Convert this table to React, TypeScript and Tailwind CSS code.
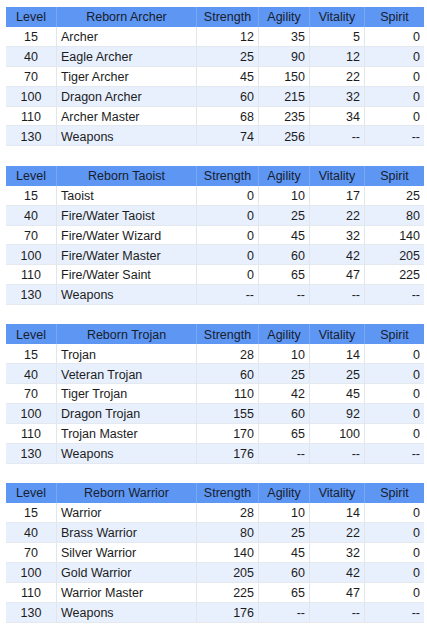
import React from "react";

type Row = [string, string, string, string, string, string];

const tables: { title: string; rows: Row[] }[] = [
  {
    title: "Reborn Archer",
    rows: [
      ["15", "Archer", "12", "35", "5", "0"],
      ["40", "Eagle Archer", "25", "90", "12", "0"],
      ["70", "Tiger Archer", "45", "150", "22", "0"],
      ["100", "Dragon Archer", "60", "215", "32", "0"],
      ["110", "Archer Master", "68", "235", "34", "0"],
      ["130", "Weapons", "74", "256", "--", "--"],
    ],
  },
  {
    title: "Reborn Taoist",
    rows: [
      ["15", "Taoist", "0", "10", "17", "25"],
      ["40", "Fire/Water Taoist", "0", "25", "22", "80"],
      ["70", "Fire/Water Wizard", "0", "45", "32", "140"],
      ["100", "Fire/Water Master", "0", "60", "42", "205"],
      ["110", "Fire/Water Saint", "0", "65", "47", "225"],
      ["130", "Weapons", "--", "--", "--", "--"],
    ],
  },
  {
    title: "Reborn Trojan",
    rows: [
      ["15", "Trojan", "28", "10", "14", "0"],
      ["40", "Veteran Trojan", "60", "25", "25", "0"],
      ["70", "Tiger Trojan", "110", "42", "45", "0"],
      ["100", "Dragon Trojan", "155", "60", "92", "0"],
      ["110", "Trojan Master", "170", "65", "100", "0"],
      ["130", "Weapons", "176", "--", "--", "--"],
    ],
  },
  {
    title: "Reborn Warrior",
    rows: [
      ["15", "Warrior", "28", "10", "14", "0"],
      ["40", "Brass Warrior", "80", "25", "22", "0"],
      ["70", "Silver Warrior", "140", "45", "32", "0"],
      ["100", "Gold Warrior", "205", "60", "42", "0"],
      ["110", "Warrior Master", "225", "65", "47", "0"],
      ["130", "Weapons", "176", "--", "--", "--"],
    ],
  },
];

const grid = "grid grid-cols-[51px_140px_62px_51px_55px_59px] w-[418px]";

function Table({ title, rows }: { title: string; rows: Row[] }) {
  const headers = ["Level", title, "Strength", "Agility", "Vitality", "Spirit"];
  return (
    <div className="flex flex-col">
      <div className={`${grid} bg-[#5e96f4] h-[20px]`}>
        {headers.map((h, i) => (
          <div
            key={i}
            className={`flex items-center justify-center pt-[1px] text-[#18202c] ${i < 5 ? "border-r border-[#7aa8f2]" : ""}`}
          >
            {h}
          </div>
        ))}
      </div>
      {rows.map((r, ri) => (
        <div
          key={ri}
          className={`${grid} h-[19.9px] border-b border-[#e4e8ef] ${ri % 2 === 1 ? "bg-[#e8f0fe]" : "bg-white"}`}
        >
          {r.map((c, ci) => (
            <div
              key={ci}
              className={`flex items-center pt-[2px] text-[#1c1c1c] ${ci < 5 ? "border-r border-[#e1e5ec]" : ""} ${
                ci === 0 ? "justify-center" : ci === 1 ? "justify-start pl-[4px]" : "justify-end pr-[4px]"
              }`}
            >
              {c}
            </div>
          ))}
        </div>
      ))}
    </div>
  );
}

export default function App() {
  return (
    <div className="w-[427px] h-[630px] bg-white pt-[7px] pl-[6px] flex flex-col gap-[19.4px] font-['Liberation_Sans',Arial,sans-serif] text-[12.5px] leading-none">
      {tables.map((t, i) => (
        <Table key={i} title={t.title} rows={t.rows} />
      ))}
    </div>
  );
}
